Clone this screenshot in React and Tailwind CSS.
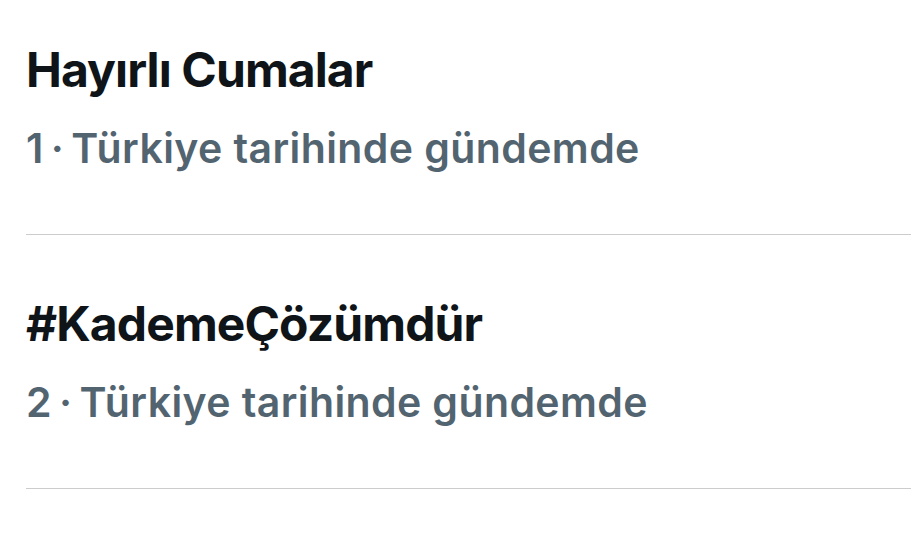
const trends = [
  { title: 'Hayırlı Cumalar', rank: '1', pad: 'pt-[42px] pb-[62px]' },
  { title: '#KademeÇözümdür', rank: '2', pad: 'pt-[61px] pb-[62px]' },
];

export default function App() {
  return (
    <div className="min-h-screen bg-white pl-[26px] font-['Inter','Noto_Sans',sans-serif]">
      {trends.map((t) => (
        <div key={t.title} className={`border-b border-[#cccccc] ${t.pad}`}>
          <div className="text-[48px] leading-[56px] font-bold text-[#0f1419] tracking-[-0.9px]">
            {t.title}
          </div>
          <div className="mt-[26px] flex gap-[7px] text-[41px] leading-[48px] font-semibold text-[#536471] tracking-[0.4px]">
            <span>{t.rank}</span>
            <span>·</span>
            <span>Türkiye tarihinde gündemde</span>
          </div>
        </div>
      ))}
    </div>
  );
}
